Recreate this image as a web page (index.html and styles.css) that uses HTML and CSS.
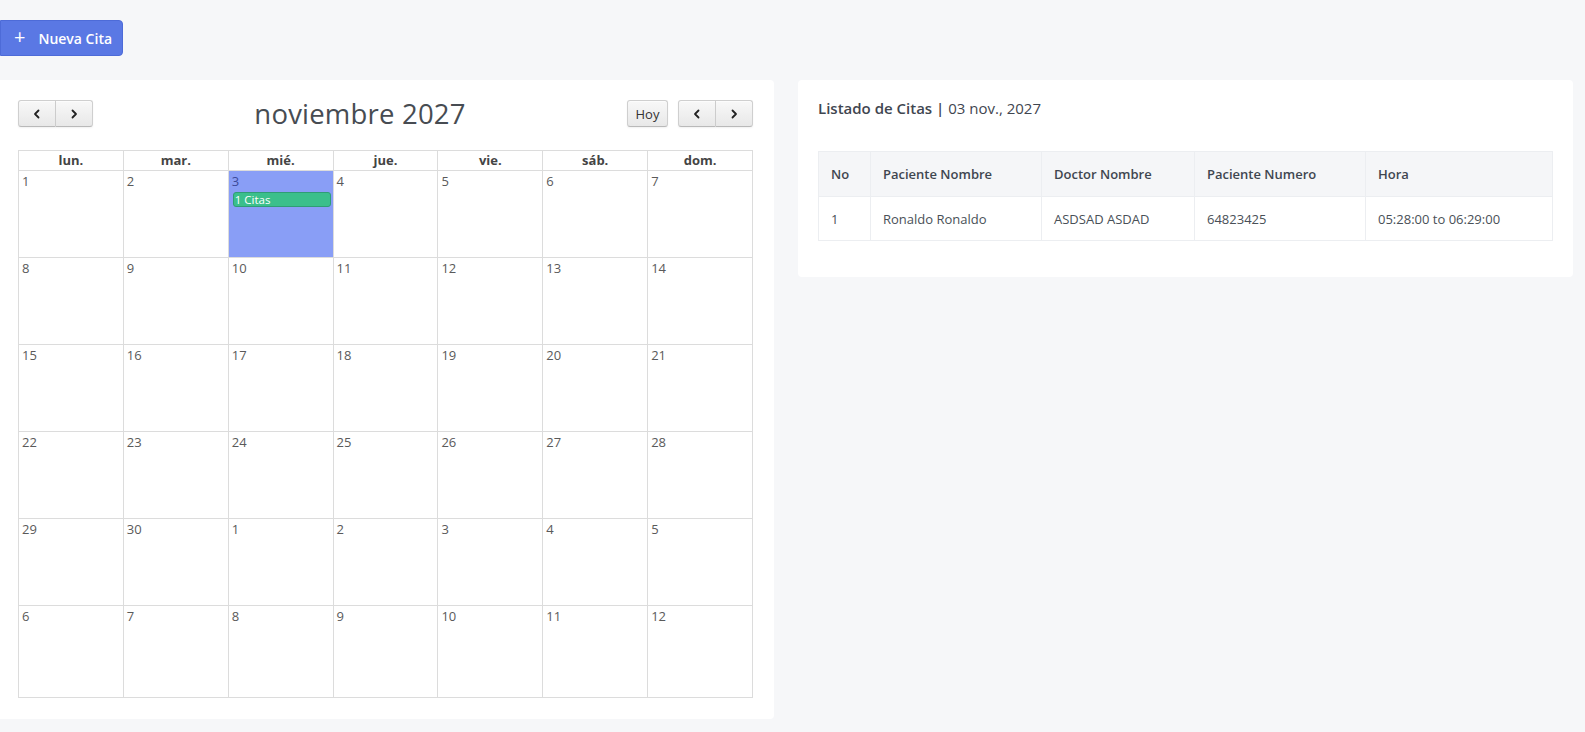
FILE: index.html
```html
<!DOCTYPE html>
<html lang="es">
<head>
<meta charset="utf-8">
<title>Citas</title>
<link rel="stylesheet" href="styles.css">
</head>
<body>
<div class="page">
  <div class="top">
    <button class="btn-new"><span class="plus">+</span><span>Nueva Cita</span></button>
  </div>
  <div class="cols">
    <div class="card cal-card">
      <div class="toolbar">
        <div class="grp">
          <button class="fc-btn first"><svg width="12" height="12" viewBox="0 0 12 12"><path d="M7.5 2.5 4 6l3.5 3.5" fill="none" stroke="#222" stroke-width="1.8" stroke-linecap="round" stroke-linejoin="round"/></svg></button><button class="fc-btn last"><svg width="12" height="12" viewBox="0 0 12 12"><path d="M4.5 2.5 8 6 4.5 9.5" fill="none" stroke="#222" stroke-width="1.8" stroke-linecap="round" stroke-linejoin="round"/></svg></button>
        </div>
        <h2 class="cal-title">noviembre 2027</h2>
        <div class="right-tools">
          <button class="fc-btn hoy">Hoy</button>
          <div class="grp">
            <button class="fc-btn first"><svg width="12" height="12" viewBox="0 0 12 12"><path d="M7.5 2.5 4 6l3.5 3.5" fill="none" stroke="#222" stroke-width="1.8" stroke-linecap="round" stroke-linejoin="round"/></svg></button><button class="fc-btn last"><svg width="12" height="12" viewBox="0 0 12 12"><path d="M4.5 2.5 8 6 4.5 9.5" fill="none" stroke="#222" stroke-width="1.8" stroke-linecap="round" stroke-linejoin="round"/></svg></button>
          </div>
        </div>
      </div>
      <div class="cal">
        <div class="dow">lun.</div><div class="dow">mar.</div><div class="dow">mié.</div><div class="dow">jue.</div><div class="dow">vie.</div><div class="dow">sáb.</div><div class="dow">dom.</div>
        <div class="day"><span class="num">1</span></div>
        <div class="day"><span class="num">2</span></div>
        <div class="day today"><span class="num">3</span><div class="event">1 Citas</div></div>
        <div class="day"><span class="num">4</span></div>
        <div class="day"><span class="num">5</span></div>
        <div class="day"><span class="num">6</span></div>
        <div class="day"><span class="num">7</span></div>
        <div class="day"><span class="num">8</span></div>
        <div class="day"><span class="num">9</span></div>
        <div class="day"><span class="num">10</span></div>
        <div class="day"><span class="num">11</span></div>
        <div class="day"><span class="num">12</span></div>
        <div class="day"><span class="num">13</span></div>
        <div class="day"><span class="num">14</span></div>
        <div class="day"><span class="num">15</span></div>
        <div class="day"><span class="num">16</span></div>
        <div class="day"><span class="num">17</span></div>
        <div class="day"><span class="num">18</span></div>
        <div class="day"><span class="num">19</span></div>
        <div class="day"><span class="num">20</span></div>
        <div class="day"><span class="num">21</span></div>
        <div class="day"><span class="num">22</span></div>
        <div class="day"><span class="num">23</span></div>
        <div class="day"><span class="num">24</span></div>
        <div class="day"><span class="num">25</span></div>
        <div class="day"><span class="num">26</span></div>
        <div class="day"><span class="num">27</span></div>
        <div class="day"><span class="num">28</span></div>
        <div class="day"><span class="num">29</span></div>
        <div class="day"><span class="num">30</span></div>
        <div class="day"><span class="num">1</span></div>
        <div class="day"><span class="num">2</span></div>
        <div class="day"><span class="num">3</span></div>
        <div class="day"><span class="num">4</span></div>
        <div class="day"><span class="num">5</span></div>
        <div class="day"><span class="num">6</span></div>
        <div class="day"><span class="num">7</span></div>
        <div class="day"><span class="num">8</span></div>
        <div class="day"><span class="num">9</span></div>
        <div class="day"><span class="num">10</span></div>
        <div class="day"><span class="num">11</span></div>
        <div class="day"><span class="num">12</span></div>
      </div>
    </div>
    <div class="card list-card">
      <h4 class="list-title"><b>Listado de Citas |</b> 03 nov., 2027</h4>
      <table class="tbl">
        <colgroup><col class="c1"><col class="c2"><col class="c3"><col class="c4"><col class="c5"></colgroup>
        <thead>
          <tr><th>No</th><th>Paciente Nombre</th><th>Doctor Nombre</th><th>Paciente Numero</th><th>Hora</th></tr>
        </thead>
        <tbody>
          <tr><td>1</td><td>Ronaldo Ronaldo</td><td>ASDSAD ASDAD</td><td>64823425</td><td>05:28:00 to 06:29:00</td></tr>
        </tbody>
      </table>
    </div>
  </div>
</div>
</body>
</html>
```

FILE: styles.css
```css
* { box-sizing: border-box; }
html, body { margin: 0; padding: 0; }
body {
  background: #f6f7f9;
  font-family: "Open Sans", "Noto Sans", sans-serif;
  color: #495057;
}
.page { padding: 20px 12px 0 0; }
.top { height: 60px; }
.btn-new {
  display: flex;
  align-items: center;
  gap: 13px;
  height: 36px;
  width: 123px;
  padding: 0 0 0 13px;
  background: #5a78e4;
  border: 1px solid #4d6bd8;
  border-radius: 0 4px 4px 0;
  color: #fff;
  font-family: inherit;
  font-size: 14px;
  font-weight: 600;
}
.plus { font-size: 20px; font-weight: 400; line-height: 1; margin-top: -2px; }
.cols {
  display: grid;
  grid-template-columns: 774px 1fr;
  gap: 24px;
  align-items: start;
}
.card { background: #fff; border-radius: 4px; }
.cal-card { padding: 20px 21px 21px 18px; height: 639px; border-radius: 0 4px 4px 0; }
.toolbar {
  display: flex;
  align-items: center;
  justify-content: space-between;
  height: 27px;
  margin-bottom: 23px;
}
.grp { display: flex; }
.fc-btn {
  height: 27px;
  width: 37.5px;
  padding: 0;
  display: flex;
  align-items: center;
  justify-content: center;
  background: linear-gradient(#f8f8f8, #e8e8e8);
  border: 1px solid #cfcfcf;
  border-bottom-color: #b9b9b9;
  box-shadow: inset 0 1px 0 rgba(255,255,255,.6), 0 1px 2px rgba(0,0,0,.06);
  color: #333;
  font-family: inherit;
  font-size: 13px;
}
.fc-btn.first { border-radius: 3px 0 0 3px; }
.fc-btn.last { border-radius: 0 3px 3px 0; border-left: 0; }
.fc-btn.hoy { width: 41px; border-radius: 3px; }
.right-tools { display: flex; gap: 10px; }
.cal-title {
  margin: 0;
  font-size: 27.5px;
  font-weight: 400;
  color: #474c52;
  letter-spacing: 0.2px;
}
.cal {
  display: grid;
  grid-template-columns: repeat(7, 1fr);
  grid-template-rows: 20px repeat(5, 87px) 92px;
  border-top: 1px solid #dcdcdc;
  border-left: 1px solid #dcdcdc;
}
.dow, .day { border-right: 1px solid #dcdcdc; border-bottom: 1px solid #dcdcdc; }
.dow {
  text-align: center;
  font-size: 13px;
  font-weight: 700;
  color: #444;
  line-height: 19px;
}
.day { padding: 2px 3px; font-size: 13px; color: #5a5a5a; line-height: 16px; }
.today { background: #899ef6; }
.today .num { color: #3c4a9a; }
.event {
  margin: 3px -1px 0 1px;
  background: #3bbf8c;
  border: 1px solid #2f9d76;
  border-radius: 3px;
  color: #fff;
  font-size: 11.5px;
  line-height: 13px;
  padding: 0 1px;
}
.list-card { padding: 18px 20px 36px 20px; }
.list-title {
  margin: 0 0 33px 0;
  font-size: 15px;
  font-weight: 400;
  line-height: 20px;
  color: #3f4650;
}
.list-title b { font-weight: 600; }
.tbl {
  width: 100%;
  border-collapse: collapse;
  font-size: 13px;
  color: #495057;
}
.c1 { width: 52px; } .c2 { width: 171px; } .c3 { width: 153px; } .c4 { width: 171px; }
.tbl th, .tbl td { border: 1px solid #eceef1; padding: 0 12px; text-align: left; }
.tbl th { height: 45px; background: #f5f6f8; font-weight: 600; color: #3f4650; }
.tbl td { height: 44px; }
```
